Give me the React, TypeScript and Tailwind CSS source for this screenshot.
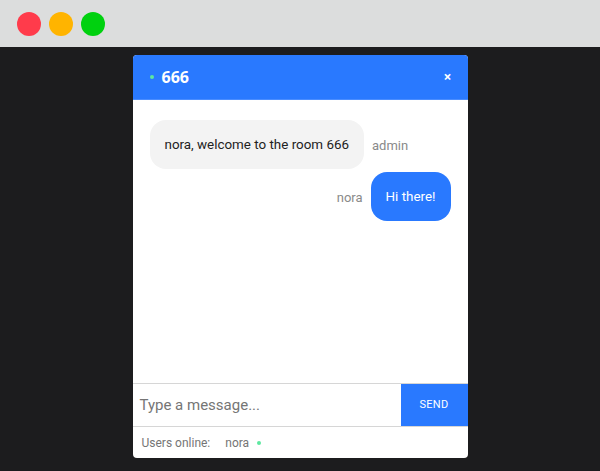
const App = () => {
  return (
    <div className="w-[600px] h-[471px] bg-[#1c1c1e] flex flex-col overflow-hidden" style={{ fontFamily: 'Roboto, "Liberation Sans", sans-serif' }}>
      {/* Window bar */}
      <div className="h-[47px] bg-[#dcdddd] flex items-center gap-[8px] pl-[17px] shrink-0">
        <span className="w-[24px] h-[24px] rounded-full bg-[#ff3b4b]" />
        <span className="w-[24px] h-[24px] rounded-full bg-[#ffb400]" />
        <span className="w-[24px] h-[24px] rounded-full bg-[#00d10f]" />
      </div>

      {/* Chat card */}
      <div className="mt-[8px] mx-auto w-[335px] h-[403px] bg-white rounded-[4px] overflow-hidden flex flex-col">
        {/* Header */}
        <div className="h-[45px] bg-[#2979ff] flex items-center justify-between pl-[17px] pr-[16px] shrink-0 border-b border-[#4a8dff]">
          <div className="flex items-center gap-[8px]">
            <span className="w-[4px] h-[4px] rounded-full bg-[#5de8a0]" />
            <span className="text-white font-bold text-[16px]" style={{ fontFamily: '"Open Sans", sans-serif' }}>666</span>
          </div>
          <span className="text-white font-bold text-[14px] leading-none" style={{ fontFamily: '"Open Sans", sans-serif' }}>×</span>
        </div>

        {/* Messages */}
        <div className="flex-1 min-h-0 flex flex-col gap-[3px] pt-[20px] px-[17px]">
          <div className="flex items-center gap-[8px]">
            <div className="h-[49px] shrink-0 px-[15px] pt-[2px] flex items-center bg-[#f3f3f3] rounded-[16px] text-[13.4px] text-[#222]">
              nora, welcome to the room 666
            </div>
            <span className="text-[13px] text-[#8a8a8a] pt-[2px]">admin</span>
          </div>
          <div className="flex items-center justify-end gap-[8px]">
            <span className="text-[13px] text-[#8a8a8a] pt-[2px]">nora</span>
            <div className="h-[49px] shrink-0 px-[15px] pt-[2px] flex items-center bg-[#2979ff] rounded-[16px] text-[13.4px] text-white">
              Hi there!
            </div>
          </div>
        </div>

        {/* Input */}
        <div className="h-[44px] flex border-y border-[#d6d6d6] shrink-0">
          <div className="flex-1 flex items-center pl-[7px] text-[15px] text-[#757575]">Type a message...</div>
          <button className="w-[67px] bg-[#2979ff] text-white text-[11px] font-normal tracking-wide">SEND</button>
        </div>

        {/* Footer */}
        <div className="h-[31px] shrink-0 flex items-center pl-[9px] text-[12px] text-[#757575]">
          <span>Users online:</span>
          <span className="ml-[15px]">nora</span>
          <span className="ml-[8px] w-[4px] h-[4px] rounded-full bg-[#5de8a0]" />
        </div>
      </div>
    </div>
  );
};

export default App;
